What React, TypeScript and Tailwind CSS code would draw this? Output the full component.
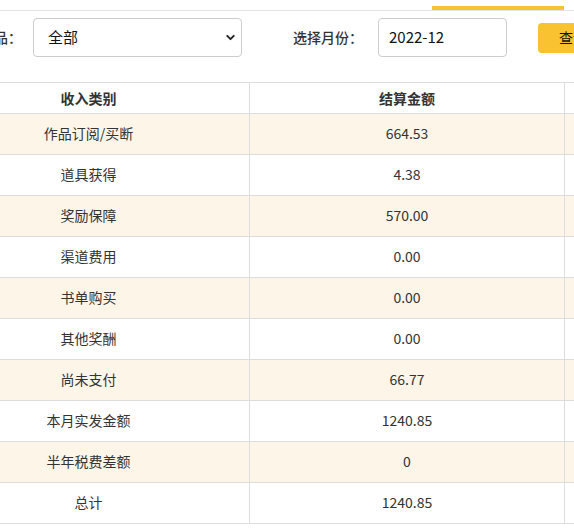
import { ChevronDown } from "lucide-react";

const rows = [
  { name: "作品订阅/买断", amount: "664.53" },
  { name: "道具获得", amount: "4.38" },
  { name: "奖励保障", amount: "570.00" },
  { name: "渠道费用", amount: "0.00" },
  { name: "书单购买", amount: "0.00" },
  { name: "其他奖酬", amount: "0.00" },
  { name: "尚未支付", amount: "66.77" },
  { name: "本月实发金额", amount: "1240.85" },
  { name: "半年税费差额", amount: "0" },
  { name: "总计", amount: "1240.85" },
];

const App = () => {
  return (
    <div className="h-[528px] w-[574px] overflow-hidden bg-white font-['Microsoft_YaHei','Noto_Sans_CJK_SC',sans-serif] text-[#333]">
      <div className="ml-[-67px] w-[760px]">
        {/* tabs */}
        <div className="h-[11px] border-b border-[#e4e4e4] pl-[499px] pt-[6px]">
          <div className="h-[4px] w-[132px] bg-[#f6c335]" />
        </div>

        {/* filters */}
        <div className="mt-[7px] flex h-[39px] items-center whitespace-nowrap text-[14px]">
          <span className="ml-[19px] w-[70px] shrink-0 font-medium">选择作品：</span>
          <div className="ml-[11px] flex h-[39px] w-[209px] shrink-0 items-center justify-between rounded-[4px] border border-[#cccccc] pl-[14px] pr-[4px] text-[15px] text-[#111]">
            <span>全部</span>
            <ChevronDown size={13} strokeWidth={3.5} className="text-[#222]" />
          </div>
          <span className="ml-[51px] w-[68px] shrink-0 font-medium">选择月份：</span>
          <div className="ml-[17px] flex h-[39px] w-[129px] shrink-0 items-center rounded-[4px] border border-[#cccccc] pl-[10px] text-[15px] text-[#111]">
            2022-12
          </div>
          <button className="ml-[31px] h-[30px] w-[76px] shrink-0 rounded-[4px] bg-[#f9c230] pl-[21px] text-left text-[14px] text-[#111]">
            查询
          </button>
        </div>

        {/* table */}
        <table className="mt-[25px] border-collapse text-[14px]">
          <thead>
            <tr className="h-[31px]">
              <th className="w-[316px] border border-[#dddddd] pr-[6px] font-bold">收入类别</th>
              <th className="w-[315px] border border-[#dddddd] font-bold">结算金额</th>
              <th className="w-[120px] border border-[#dddddd]" />
            </tr>
          </thead>
          <tbody>
            {rows.map((r, i) => (
              <tr key={i} className={`h-[41px] ${i % 2 === 0 ? "bg-[#fdf6e8]" : "bg-white"}`}>
                <td className="border border-[#dddddd] pb-[2px] pr-[6px] text-center">{r.name}</td>
                <td className="border border-[#dddddd] pb-[2px] text-center">{r.amount}</td>
                <td className="border border-[#dddddd]" />
              </tr>
            ))}
          </tbody>
        </table>
      </div>
    </div>
  );
};

export default App;
